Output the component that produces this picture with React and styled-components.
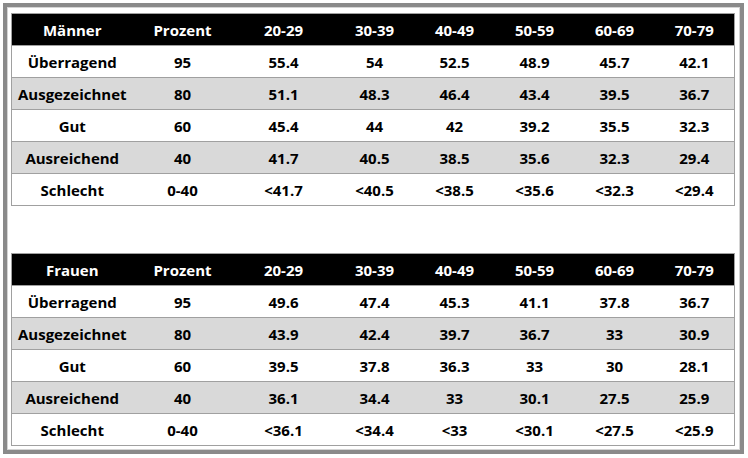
import React from 'react';
import styled, { createGlobalStyle } from 'styled-components';

const GlobalStyle = createGlobalStyle`
  body {
    margin: 0;
    background: #ffffff;
    font-family: "Open Sans", "Liberation Sans", Arial, sans-serif;
  }
`;

const Page = styled.div`
  box-sizing: border-box;
  width: 748px;
  height: 458px;
  padding: 3px 4px 4px 3px;
`;

const Frame = styled.div`
  box-sizing: border-box;
  height: 451px;
  border: 4px solid #8a8a8a;
  box-shadow: inset 1px 1px 0 #d4d4d4, inset -1px -1px 0 #d4d4d4;
  padding: 6px 6px 4px 4px;
  display: flex;
  flex-direction: column;
  gap: 47px;
`;

const Table = styled.table`
  width: 723px;
  border-collapse: collapse;
  table-layout: fixed;
  border: 1px solid #a0a0a0;
  font-size: 15px;
  font-weight: 700;
`;

const HeadCell = styled.th`
  box-sizing: border-box;
  height: 32px;
  padding: 1px 0 0;
  background: #000000;
  color: #ffffff;
  font-weight: 700;
  text-align: center;
  vertical-align: middle;
  line-height: 18px;
`;

const Row = styled.tr`
  background: ${(p) => (p.$shade ? '#d9d9d9' : '#ffffff')};
  border-top: 1px solid #a0a0a0;
`;

const Cell = styled.td`
  box-sizing: border-box;
  height: 32px;
  padding: 1px 0 0;
  color: #000000;
  text-align: center;
  vertical-align: middle;
  white-space: nowrap;
  line-height: 18px;
`;

const widths = [121, 100, 102, 80, 80, 80, 80, 80];
const ages = ['20-29', '30-39', '40-49', '50-59', '60-69', '70-79'];

const tables = [
  {
    title: 'Männer',
    rows: [
      ['Überragend', '95', '55.4', '54', '52.5', '48.9', '45.7', '42.1'],
      ['Ausgezeichnet', '80', '51.1', '48.3', '46.4', '43.4', '39.5', '36.7'],
      ['Gut', '60', '45.4', '44', '42', '39.2', '35.5', '32.3'],
      ['Ausreichend', '40', '41.7', '40.5', '38.5', '35.6', '32.3', '29.4'],
      ['Schlecht', '0-40', '<41.7', '<40.5', '<38.5', '<35.6', '<32.3', '<29.4'],
    ],
  },
  {
    title: 'Frauen',
    rows: [
      ['Überragend', '95', '49.6', '47.4', '45.3', '41.1', '37.8', '36.7'],
      ['Ausgezeichnet', '80', '43.9', '42.4', '39.7', '36.7', '33', '30.9'],
      ['Gut', '60', '39.5', '37.8', '36.3', '33', '30', '28.1'],
      ['Ausreichend', '40', '36.1', '34.4', '33', '30.1', '27.5', '25.9'],
      ['Schlecht', '0-40', '<36.1', '<34.4', '<33', '<30.1', '<27.5', '<25.9'],
    ],
  },
];

const ScoreTable = ({ title, rows }) => (
  <Table>
    <colgroup>
      {widths.map((w, i) => (
        <col key={i} style={{ width: w }} />
      ))}
    </colgroup>
    <thead>
      <tr>
        {[title, 'Prozent', ...ages].map((h) => (
          <HeadCell key={h}>{h}</HeadCell>
        ))}
      </tr>
    </thead>
    <tbody>
      {rows.map((r, i) => (
        <Row key={r[0]} $shade={i % 2 === 1}>
          {r.map((v, j) => (
            <Cell key={j}>{v}</Cell>
          ))}
        </Row>
      ))}
    </tbody>
  </Table>
);

export default function App() {
  return (
    <Page>
      <GlobalStyle />
      <Frame>
        {tables.map((t) => (
          <ScoreTable key={t.title} title={t.title} rows={t.rows} />
        ))}
      </Frame>
    </Page>
  );
}
